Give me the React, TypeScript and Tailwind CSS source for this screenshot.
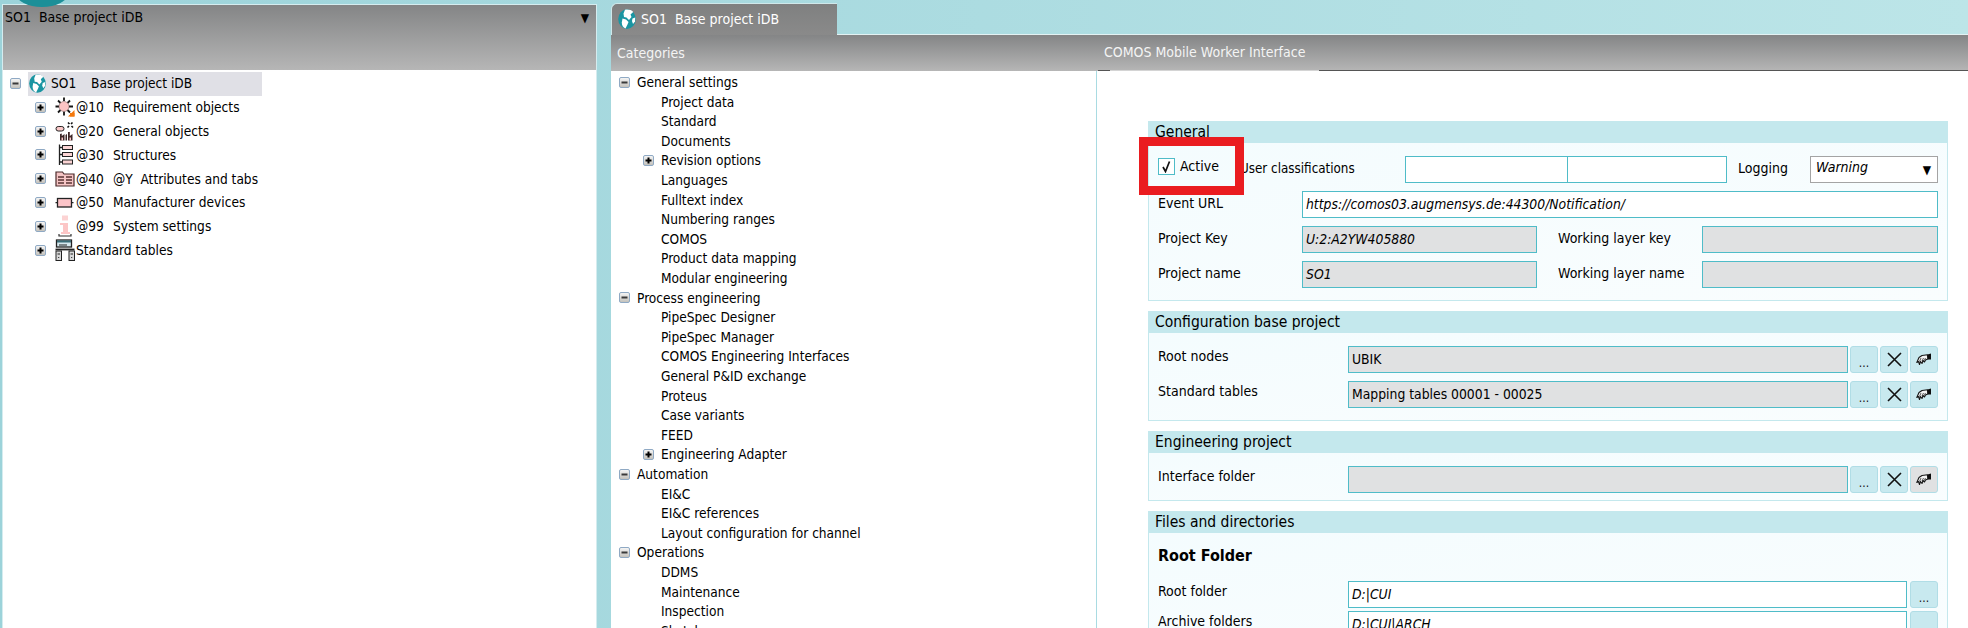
import React from "react";

const font = "font-['DejaVu_Sans_Condensed','DejaVu_Sans',sans-serif]";

function Toggle({ open = false }: { open?: boolean }) {
  return (
    <span className="flex h-[11px] w-[11px] shrink-0 items-center justify-center rounded-[2px] border border-[#8fa9c4] bg-linear-to-b from-[#f4f4f4] to-[#c4c2bc]">
      <svg width="7" height="7" viewBox="0 0 7 7">
        <rect x="0.5" y="2.5" width="6" height="2" fill={open ? "#3a3a3a" : "#000"} />
        {!open && <rect x="2.5" y="0.5" width="2" height="6" fill="#000" />}
      </svg>
    </span>
  );
}

function Globe({ size = 17 }: { size?: number }) {
  return (
    <svg width={size} height={size * 1.12} viewBox="0 0 18 20" className="shrink-0">
      <ellipse cx="9" cy="10" rx="8.800" ry="9.800" fill="#1a95a2" />
      <path d="M7 0.600C10 0 13.500 0.800 15.200 2.800L12.500 5.500 13.500 8 11 11 8.500 8.500 6 8 5.500 4.500Z" fill="#ffffff" />
      <path d="M4.500 9.500L8 10.500 10.500 13 9.500 15.500 7.500 19.400C5 18.800 3.800 16 3.800 13.500Z" fill="#ffffff" />
      <path d="M14.500 9.500L17.200 8.500 17 12.500 15 15 14 12Z" fill="#ffffff" />
    </svg>
  );
}

function IconReq() {
  return (
    <svg width="20" height="20" viewBox="0 0 20 20">
      <path d="M9 0.500V4M9 14.500V18.500M0.500 9.500H4M14 9.500H18M3 3.500L5.500 6M12.500 13L15 15.500M15 3.500L12.500 6M5.500 13L3 15.500" stroke="#161616" strokeWidth="1.800" />
      <circle cx="9" cy="9.500" r="5" fill="#fbc4c4" stroke="#6a4a4a" strokeWidth="0.500" />
      <path d="M19.500 13V19.500H13Z" fill="#f4780c" />
      <rect x="15" y="16" width="4.500" height="3.500" fill="#f4780c" />
    </svg>
  );
}

function IconGen() {
  return (
    <svg width="20" height="20" viewBox="0 0 20 20">
      <rect x="1" y="5.500" width="8" height="4.500" rx="2.200" fill="#fbc9c9" stroke="#222" />
      <path d="M12.500 6.500L14 5M16 3L17.500 1.500M13 1.500L14.500 3M16.500 5L18 6.500" stroke="#111" strokeWidth="1.600" />
      <path d="M5 19.500V13L6.800 12.500V15L9.500 13V19.500ZM10.500 19.500V14L12 13V19.500ZM13 19.500V11H14.800V15L17.500 13V19.500Z" fill="#3e2727" />
      <path d="M6.500 19.500V16.500H8V19.500ZM14.500 19.500V16.500H16V19.500Z" fill="#fbc9c9" />
    </svg>
  );
}

function IconStruct() {
  return (
    <svg width="20" height="22" viewBox="0 0 20 22">
      <path d="M4.500 0.500V21M4.500 3.500H7.500M4.500 10.500H7.500M4.500 18H7.500" stroke="#222" strokeWidth="1.300" fill="none" />
      <rect x="7.500" y="1.500" width="10" height="4" fill="#fbd4d4" stroke="#222" />
      <rect x="7.500" y="8.500" width="10" height="4" fill="#fbd4d4" stroke="#222" />
      <rect x="7.500" y="16" width="10" height="4" fill="#fbd4d4" stroke="#222" />
    </svg>
  );
}

function IconAttr() {
  return (
    <svg width="20" height="17" viewBox="0 0 20 17">
      <path d="M1 16V2H7.500L9 4H19V16Z" fill="#f6c5c5" stroke="#4a2a2a" strokeWidth="1.200" />
      <path d="M3 7H9M3 10H9M3 13H9M11 7H17M11 10H17M11 13H17" stroke="#5a3333" strokeWidth="1.300" />
    </svg>
  );
}

function IconDev() {
  return (
    <svg width="20" height="14" viewBox="0 0 20 14">
      <rect x="2.500" y="2.500" width="14" height="8.500" fill="#fcc4c8" stroke="#222" strokeWidth="1.300" />
      <path d="M0.500 6.700H2.500M16.500 6.700H18.500" stroke="#222" strokeWidth="1.300" />
    </svg>
  );
}

function IconSys() {
  return (
    <svg width="14" height="22" viewBox="0 0 14 22">
      <rect x="4" y="0.500" width="6" height="5" fill="#fcd3d3" />
      <path d="M2 8H10V17H12V19H3V17H5V10H2Z" fill="#fcc6c6" />
      <path d="M1 19V21H13V19" stroke="#333" strokeWidth="1.200" fill="none" />
    </svg>
  );
}

function IconTable() {
  return (
    <svg width="20" height="22" viewBox="0 0 20 22">
      <rect x="1.500" y="1" width="15" height="7" fill="#d6e8ee" stroke="#222" strokeWidth="1.300" />
      <rect x="2" y="1.500" width="14" height="2" fill="#3a6d78" />
      <path d="M0.500 10.500H19.500" stroke="#222" strokeWidth="1.800" />
      <path d="M4 6H12" stroke="#222" />
      <rect x="1" y="12" width="5.500" height="9.500" fill="#d8d8d8" stroke="#222" />
      <rect x="14" y="12" width="5.500" height="9.500" fill="#d8d8d8" stroke="#222" />
      <path d="M2.500 15H5M15.500 15H18M3.700 18V19M16.700 18V19" stroke="#222" />
    </svg>
  );
}

function Hand() {
  return (
    <svg width="16" height="13" viewBox="0 0 16 13">
      <path d="M0.800 9.500L3 4.500 6 2.500 11.500 1.800 11.800 6 9.500 7 8.500 9 7 7.500 6 10.500 4.500 8.500 3.500 11.500 2.500 8.500Z" fill="#f2f2f2" stroke="#161616" strokeWidth="1.100" strokeLinejoin="round" />
      <path d="M5 5L3.500 8.500M7.500 5L6 8M9.500 5L8.200 7.500" stroke="#161616" strokeWidth="0.700" />
      <path d="M11.500 1.500L15 0.500V6.500L11.800 6.500Z" fill="#0d0d0d" />
    </svg>
  );
}

const treeRows: { icon: React.ReactNode; a?: string; b: string }[] = [
  { icon: <IconReq />, a: "@10", b: "Requirement objects" },
  { icon: <IconGen />, a: "@20", b: "General objects" },
  { icon: <IconStruct />, a: "@30", b: "Structures" },
  { icon: <IconAttr />, a: "@40", b: "@Y  Attributes and tabs" },
  { icon: <IconDev />, a: "@50", b: "Manufacturer devices" },
  { icon: <IconSys />, a: "@99", b: "System settings" },
  { icon: <IconTable />, b: "Standard tables" },
];

const cats: [string, number, boolean?][] = [
  ["General settings", 0],
  ["Project data", 1],
  ["Standard", 1],
  ["Documents", 1],
  ["Revision options", 1, true],
  ["Languages", 1],
  ["Fulltext index", 1],
  ["Numbering ranges", 1],
  ["COMOS", 1],
  ["Product data mapping", 1],
  ["Modular engineering", 1],
  ["Process engineering", 0],
  ["PipeSpec Designer", 1],
  ["PipeSpec Manager", 1],
  ["COMOS Engineering Interfaces", 1],
  ["General P&ID exchange", 1],
  ["Proteus", 1],
  ["Case variants", 1],
  ["FEED", 1],
  ["Engineering Adapter", 1, true],
  ["Automation", 0],
  ["EI&C", 1],
  ["EI&C references", 1],
  ["Layout configuration for channel", 1],
  ["Operations", 0],
  ["DDMS", 1],
  ["Maintenance", 1],
  ["Inspection", 1],
  ["Sketch", 1],
];

function Group({ title, children, className = "" }: { title: string; children: React.ReactNode; className?: string }) {
  return (
    <section className={`relative ${className}`}>
      <h2 className="flex h-[22px] items-center bg-[#c4e8ed] pl-[7px] pt-[2px] text-[15.5px] font-normal text-black">{title}</h2>
      <div className="border border-t-0 border-[#c4e8ed] bg-linear-to-br from-[#f4fcfe] to-[#f9fdfe] px-[9px]">{children}</div>
    </section>
  );
}

function Field({ value, gray, className = "", italic = true }: { value?: string; gray?: boolean; className?: string; italic?: boolean }) {
  return (
    <div className={`flex h-[27px] items-center overflow-hidden border border-[#4fbcc8] pb-[1px] pl-[3px] text-[13.8px] ${italic ? "italic" : ""} ${gray ? "bg-[#e0e1e2]" : "bg-white"} ${className}`}>
      {value}
    </div>
  );
}

function Btn({ children, gray }: { children: React.ReactNode; gray?: boolean }) {
  return (
    <button className={`flex h-[27px] w-[28px] shrink-0 items-center justify-center rounded-[3px] border border-[#b0dde6] ${gray ? "bg-[#e0e1e2]" : "bg-[#c8e9ef]"}`}>
      {children}
    </button>
  );
}

function Dots() {
  return <span className="mt-[7px] text-[12px] leading-none text-[#111]">...</span>;
}

function XIcon() {
  return (
    <svg width="17" height="17" viewBox="0 0 17 17">
      <path d="M2 2L15 15M15 2L2 15" stroke="#111" strokeWidth="1.600" />
    </svg>
  );
}

function PickRow({ label, value, gray, handGray, italic }: { label: string; value?: string; gray?: boolean; handGray?: boolean; italic?: boolean }) {
  return (
    <div className="flex h-[27px] items-center">
      <div className="w-[190px] shrink-0 pb-[6px] text-[14px]">{label}</div>
      <Field value={value} gray={gray} italic={italic} className="w-[500px]" />
      <div className="ml-[2px] flex gap-[2px]">
        <Btn><Dots /></Btn>
        <Btn><XIcon /></Btn>
        <Btn gray={handGray}><Hand /></Btn>
      </div>
    </div>
  );
}

function FolderRow({ label, value }: { label: string; value: string }) {
  return (
    <div className="flex h-[27px] items-center">
      <div className="w-[190px] shrink-0 pb-[6px] text-[14px]">{label}</div>
      <Field value={value} className="w-[559px]" />
      <div className="ml-[3px]">
        <Btn><Dots /></Btn>
      </div>
    </div>
  );
}

export default function App() {
  return (
    <div className={`relative flex h-[628px] w-[1968px] overflow-hidden bg-linear-to-r from-[#9cd3da] to-[#bce5e8] text-[14px] text-black ${font}`}>
      <div className="absolute left-[16px] top-[-20px] z-10 h-[27px] w-[52px] rounded-[50%] bg-[#1c8f98]" />

      <aside className="ml-[2px] mt-[4px] flex h-[624px] w-[595px] shrink-0 flex-col border-x border-t border-[#d5ecef] bg-white">
        <div className="flex h-[65px] shrink-0 items-start justify-between bg-linear-to-b from-[#848586] to-[#b6b6b6] pl-[2px] pr-[7px] pt-[2px]">
          <span>SO1&nbsp; Base project iDB</span>
          <span className="mt-[5px] text-[12px] leading-none">▼</span>
        </div>
        <div className="pl-[7px] pt-[1.5px] text-[13.6px]">
          <div className="flex h-[24px] w-[253px] items-center">
            <Toggle open />
            <div className="ml-[7px] flex h-[24px] w-[234px] items-center bg-[#e0e0e6]">
              <span className="ml-[1px]"><Globe size={17} /></span>
              <span className="ml-[5px] w-[40px] shrink-0">SO1</span>
              <span>Base project iDB</span>
            </div>
          </div>
          {treeRows.map((r) => (
            <div key={r.b} className="flex h-[23.8px] items-center pl-[25px]">
              <Toggle />
              <span className="ml-[8px] flex w-[22px] shrink-0 justify-center">{r.icon}</span>
              <span className="flex whitespace-pre">
                {r.a && <span className="w-[37px] shrink-0">{r.a}</span>}
                <span>{r.b}</span>
              </span>
            </div>
          ))}
        </div>
      </aside>

      <main className="ml-[14px] flex w-[1357px] shrink-0 flex-col pt-[3px]">
        <div className="flex h-[32px] shrink-0 items-end">
          <div className="flex h-[32px] w-[226px] items-center gap-[5px] rounded-tl-[6px] border-l border-t border-[#cfe8ea] bg-linear-to-b from-[#7f8080] to-[#8a8a8a] pl-[6px] text-white">
            <Globe size={18} />
            <span>SO1&nbsp; Base project iDB</span>
          </div>
          <div className="h-[1px] flex-1 bg-[#e3f2f3]" />
        </div>
        <div className="flex h-[36px] shrink-0 bg-linear-to-b from-[#848586] to-[#b6b6b6] text-[#f4f4f4]">
          <div className="flex w-[487px] items-center pl-[6px]">Categories</div>
          <div className="flex flex-1 flex-col">
            <div className="flex flex-1 items-center pl-[6px]">COMOS Mobile Worker Interface</div>
            <div className="flex h-[1px] shrink-0 bg-[#555]">
              <div className="ml-[12px] w-[209px] bg-[#d4d4d4]" />
            </div>
          </div>
        </div>
        <div className="flex min-h-0 flex-1">
          <nav className="w-[486px] shrink-0 overflow-hidden border-r border-[#a9dbe2] bg-white pt-[1.5px] text-[13.6px]">
            {cats.map(([t, lvl, exp]) => (
              <div key={t} className="flex h-[19.6px] items-center whitespace-nowrap">
                {lvl === 0 ? (
                  <span className="ml-[8px] flex items-center gap-[7px]"><Toggle open />{t}</span>
                ) : exp ? (
                  <span className="ml-[32px] flex items-center gap-[7px]"><Toggle />{t}</span>
                ) : (
                  <span className="ml-[50px]">{t}</span>
                )}
              </div>
            ))}
          </nav>
          <div className="min-w-0 flex-1 overflow-hidden bg-white pl-[51px] pr-[20px] pt-[50px]">
            <Group title="General">
              <div className="pb-[12px] pt-[13px]">
                <div className="flex h-[27px] items-center">
                  <span className="mb-[7px] flex h-[17px] w-[17px] shrink-0 items-center justify-center border border-[#4fbcc8] bg-white">
                    <svg width="11" height="13" viewBox="0 0 11 13"><path d="M2 7L4.500 11.500L8.500 1.500" fill="none" stroke="#111" strokeWidth="1.700" /></svg>
                  </span>
                  <span className="mb-[7px] ml-[5px] w-[60px] shrink-0">Active</span>
                  <span className="w-[165px] shrink-0 pb-[2px] text-[13.3px]">User classifications</span>
                  <div className="flex h-[27px] w-[322px] shrink-0 border border-[#4fbcc8] bg-white">
                    <div className="w-[162px] border-r border-[#4fbcc8]" />
                  </div>
                  <span className="ml-[11px] w-[72px] shrink-0 pb-[2px]">Logging</span>
                  <div className="flex h-[27px] w-[128px] shrink-0 items-center justify-between border border-[#a4a4a4] bg-white pl-[5px] pr-[6px] text-[14px] italic">
                    <span className="pb-[4px]">Warning</span>
                    <span className="not-italic text-[12px] leading-none">▼</span>
                  </div>
                </div>
                <div className="mt-[8px] flex h-[27px] items-center">
                  <div className="w-[144px] shrink-0 pb-[3px]">Event URL</div>
                  <Field value="https://comos03.augmensys.de:44300/Notification/" className="flex-1" />
                </div>
                <div className="mt-[8px] flex h-[27px] items-center">
                  <div className="w-[144px] shrink-0 pb-[3px]">Project Key</div>
                  <Field value="U:2:A2YW405880" gray className="w-[235px]" />
                  <div className="ml-[21px] w-[144px] shrink-0 pb-[3px]">Working layer key</div>
                  <Field gray className="flex-1" />
                </div>
                <div className="mt-[8px] flex h-[27px] items-center">
                  <div className="w-[144px] shrink-0 pb-[3px]">Project name</div>
                  <Field value="SO1" gray className="w-[235px]" />
                  <div className="ml-[21px] w-[144px] shrink-0 pb-[3px]">Working layer name</div>
                  <Field gray className="flex-1" />
                </div>
              </div>
              <div className="pointer-events-none absolute left-[-9px] top-[16px] h-[58px] w-[105px] border-[9px] border-[#ea1c20]" />
            </Group>

            <Group title="Configuration base project" className="mt-[10px]">
              <div className="flex flex-col gap-[8px] pb-[12px] pt-[13px]">
                <PickRow label="Root nodes" value="UBIK" gray italic={false} />
                <PickRow label="Standard tables" value="Mapping tables 00001 - 00025" gray italic={false} />
              </div>
            </Group>

            <Group title="Engineering project" className="mt-[10px]">
              <div className="pb-[7px] pt-[13px]">
                <PickRow label="Interface folder" gray handGray />
              </div>
            </Group>

            <Group title="Files and directories" className="mt-[10px]">
              <div className="pt-[12px]">
                <div className="flex h-[22px] items-center text-[16px] font-bold">Root Folder</div>
                <div className="mt-[14px] flex flex-col gap-[3px]">
                  <FolderRow label="Root folder" value="D:|CUI" />
                  <FolderRow label="Archive folders" value="D:|CUI|ARCH" />
                </div>
              </div>
            </Group>
          </div>
        </div>
      </main>
    </div>
  );
}
